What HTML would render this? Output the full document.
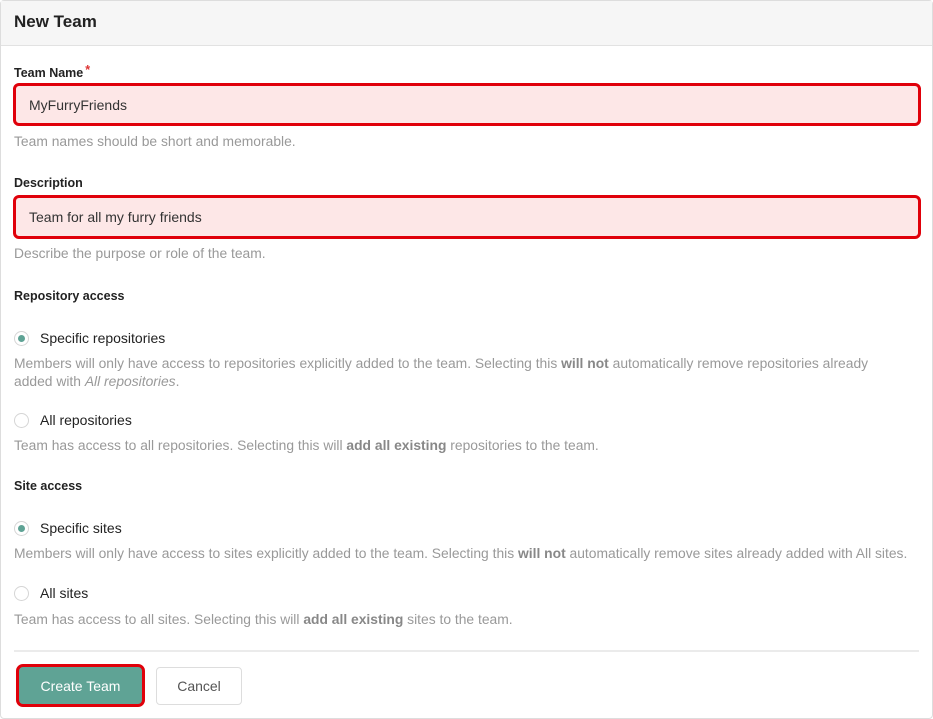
<!DOCTYPE html>
<html><head><style>
*{box-sizing:border-box;margin:0;padding:0}
body{width:933px;height:719px;background:#fff;font-family:"Liberation Sans",sans-serif;position:relative;overflow:hidden;color:#222}
.p{position:absolute;left:0;top:0;width:933px;height:719px;border:1px solid #ddd;border-radius:4px}
.hd{position:absolute;left:1px;top:1px;width:931px;height:45px;background:#f6f6f6;border-bottom:1px solid #e2e2e2}
.a{position:absolute;white-space:nowrap}
.lbl{font-size:12.5px;font-weight:bold;color:#222}
.hint{font-size:13.85px;color:#999}
.inp{position:absolute;left:13px;width:908px;border:3px solid #e0000a;border-radius:6px;background:#fde7e7;font-size:14px;color:#333;padding-left:13px;display:flex;align-items:center}
.r{position:absolute;left:14px;width:15px;height:15px;border:1px solid #d5d5d5;border-radius:50%;background:#fff}
.r.on::after{content:"";position:absolute;left:3px;top:3px;width:7px;height:7px;border-radius:50%;background:#5fa395}
.rl{font-size:14px;color:#222}
</style></head><body>
<div class="p"></div>
<div class="hd"></div>
<div class="a" style="left:14px;top:12px;font-size:17px;font-weight:bold;color:#222">New Team</div>
<div class="a lbl" style="left:14px;top:63px">Team Name<span style="color:#d33;margin-left:2px;vertical-align:3px">*</span></div>
<div class="inp" style="top:83px;height:43px">MyFurryFriends</div>
<div class="a hint" style="left:14px;top:133px">Team names should be short and memorable.</div>
<div class="a lbl" style="left:14px;top:176px">Description</div>
<div class="inp" style="top:195px;height:44px">Team for all my furry friends</div>
<div class="a hint" style="left:14px;top:245px">Describe the purpose or role of the team.</div>
<div class="a lbl" style="left:14px;top:289px">Repository access</div>
<div class="r on" style="top:331px"></div>
<div class="a rl" style="left:40px;top:330px">Specific repositories</div>
<div class="a hint" style="left:14px;top:354px;line-height:18px">Members will only have access to repositories explicitly added to the team. Selecting this <b style="color:#888">will not</b> automatically remove repositories already<br>added with <i>All repositories</i>.</div>
<div class="r" style="top:413px"></div>
<div class="a rl" style="left:40px;top:412px">All repositories</div>
<div class="a hint" style="left:14px;top:437px">Team has access to all repositories. Selecting this will <b style="color:#888">add all existing</b> repositories to the team.</div>
<div class="a lbl" style="left:14px;top:479px">Site access</div>
<div class="r on" style="top:521px"></div>
<div class="a rl" style="left:40px;top:520px">Specific sites</div>
<div class="a hint" style="left:14px;top:545px">Members will only have access to sites explicitly added to the team. Selecting this <b style="color:#888">will not</b> automatically remove sites already added with All sites.</div>
<div class="r" style="top:586px"></div>
<div class="a rl" style="left:40px;top:585px">All sites</div>
<div class="a hint" style="left:14px;top:611px">Team has access to all sites. Selecting this will <b style="color:#888">add all existing</b> sites to the team.</div>
<div class="a" style="left:14px;top:650px;width:905px;height:2px;background:#ebebeb"></div>
<div class="a" style="left:16px;top:664px;width:129px;height:43px;border:3px solid #e0000a;border-radius:7px;background:#5fa395;color:#fff;font-size:14px;display:flex;align-items:center;justify-content:center">Create Team</div>
<div class="a" style="left:156px;top:667px;width:86px;height:38px;border:1px solid #ddd;border-radius:4px;background:#fff;color:#555;font-size:14px;display:flex;align-items:center;justify-content:center">Cancel</div>
</body></html>
